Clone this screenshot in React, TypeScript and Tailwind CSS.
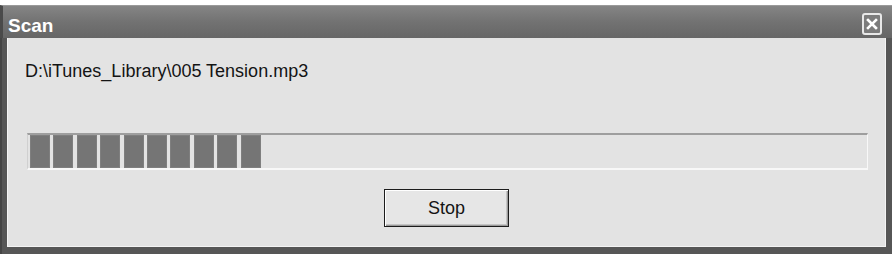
import React from "react";

export default function App() {
  const blocks = Array.from({ length: 10 });
  return (
    <div className="w-[892px] h-[254px] bg-white pt-[5px]" style={{ fontFamily: '"Liberation Sans", Arial, sans-serif' }}>
      <div className="h-[249px] flex flex-col bg-[#565656]">
        {/* Title bar */}
        <div className="h-[33px] flex items-center justify-between pl-[8px] pr-[10px] bg-gradient-to-b from-[#858585] via-[#727272] to-[#666666] border-t border-[#9a9a9a] border-l-[3px] border-l-[#4a4a4a]">
          <span className="text-white font-bold text-[19px] leading-none pt-[7px] -ml-[3px]">Scan</span>
          <div className="w-[20px] h-[22px] mt-[4px] rounded-[3px] border-2 border-[#e8e8e8] bg-[#7c7c7c] flex items-center justify-center">
            <svg width="12" height="12" viewBox="0 0 12 12">
              <path d="M2 2 L10 10 M10 2 L2 10" stroke="#ffffff" strokeWidth="2.6" strokeLinecap="square" />
            </svg>
          </div>
        </div>
        {/* Body */}
        <div className="flex-1 flex flex-col pl-[7px] pr-[6px] pb-[7px] border-l-[2px] border-l-[#444]">
          <div className="flex-1 flex flex-col bg-[#e3e3e3] border-l border-r border-b border-[#f4f4f4] -ml-[2px]">
            <div className="pl-[17px] pt-[22px] text-[18px] leading-[22px] text-[#141414]">
              D:\iTunes_Library\005 Tension.mp3
            </div>
            <div className="mt-[51px] ml-[19px] mr-[17px] h-[37px] flex items-stretch gap-[3.4px] pl-[2px] border-t-2 border-t-[#9e9e9e] border-b-2 border-b-[#f8f8f8] border-r border-r-[#f8f8f8] border-l border-l-[#d0d0d0]">
              {blocks.map((_, i) => (
                <div key={i} className="w-[20px] bg-[#757575] border border-[#7f7f7f]" />
              ))}
            </div>
            <div className="mt-[19px] flex justify-center">
              <button className="w-[125px] h-[38px] bg-[#e6e6e6] border border-[#1c1c1c] shadow-[inset_1px_1px_0_#ffffff,inset_-1px_-1px_0_#9a9a9a,inset_-2px_-2px_0_#c4c4c4] text-[18px] text-[#141414] flex items-center justify-center" style={{ fontFamily: '"Liberation Sans", Arial, sans-serif' }}>
                Stop
              </button>
            </div>
          </div>
        </div>
      </div>
    </div>
  );
}
